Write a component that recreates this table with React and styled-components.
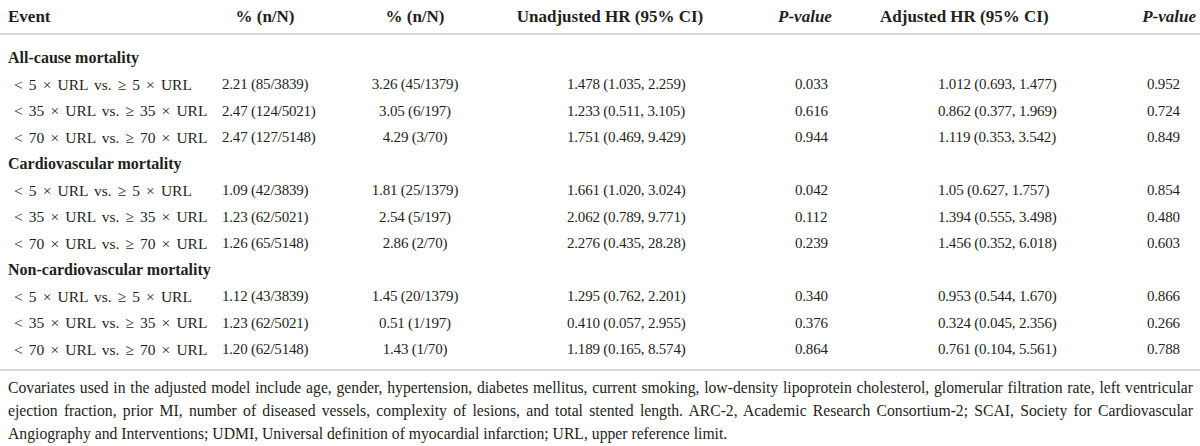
import React from "react";
import styled, { createGlobalStyle } from "styled-components";

const GlobalStyle = createGlobalStyle`
  html, body {
    margin: 0;
    padding: 0;
    background: #ffffff;
  }
  body {
    font-family: "Liberation Serif", "Times New Roman", serif;
    color: #231f20;
  }
`;

const sections = [
  {
    title: "All-cause mortality",
    rows: [
      ["< 5 × URL vs. ≥ 5 × URL", "2.21 (85/3839)", "3.26 (45/1379)", "1.478 (1.035, 2.259)", "0.033", "1.012 (0.693, 1.477)", "0.952"],
      ["< 35 × URL vs. ≥ 35 × URL", "2.47 (124/5021)", "3.05 (6/197)", "1.233 (0.511, 3.105)", "0.616", "0.862 (0.377, 1.969)", "0.724"],
      ["< 70 × URL vs. ≥ 70 × URL", "2.47 (127/5148)", "4.29 (3/70)", "1.751 (0.469, 9.429)", "0.944", "1.119 (0.353, 3.542)", "0.849"],
    ],
  },
  {
    title: "Cardiovascular mortality",
    rows: [
      ["< 5 × URL vs. ≥ 5 × URL", "1.09 (42/3839)", "1.81 (25/1379)", "1.661 (1.020, 3.024)", "0.042", "1.05 (0.627, 1.757)", "0.854"],
      ["< 35 × URL vs. ≥ 35 × URL", "1.23 (62/5021)", "2.54 (5/197)", "2.062 (0.789, 9.771)", "0.112", "1.394 (0.555, 3.498)", "0.480"],
      ["< 70 × URL vs. ≥ 70 × URL", "1.26 (65/5148)", "2.86 (2/70)", "2.276 (0.435, 28.28)", "0.239", "1.456 (0.352, 6.018)", "0.603"],
    ],
  },
  {
    title: "Non-cardiovascular mortality",
    rows: [
      ["< 5 × URL vs. ≥ 5 × URL", "1.12 (43/3839)", "1.45 (20/1379)", "1.295 (0.762, 2.201)", "0.340", "0.953 (0.544, 1.670)", "0.866"],
      ["< 35 × URL vs. ≥ 35 × URL", "1.23 (62/5021)", "0.51 (1/197)", "0.410 (0.057, 2.955)", "0.376", "0.324 (0.045, 2.356)", "0.266"],
      ["< 70 × URL vs. ≥ 70 × URL", "1.20 (62/5148)", "1.43 (1/70)", "1.189 (0.165, 8.574)", "0.864", "0.761 (0.104, 5.561)", "0.788"],
    ],
  },
];

// per column: header alignment, data alignment and data indent
const columns = [
  { head: "Event", headAlign: "left", headPad: 8, align: "left", pad: 14, label: true },
  { head: "% (n/N)", headAlign: "center", align: "left", pad: 32 },
  { head: "% (n/N)", headAlign: "center", align: "center", pad: 0 },
  { head: "Unadjusted HR (95% CI)", headAlign: "center", align: "left", pad: 77 },
  { head: "P-value", italic: true, headAlign: "center", align: "left", pad: 65 },
  { head: "Adjusted HR (95% CI)", headAlign: "center", align: "left", pad: 58 },
  { head: "P-value", italic: true, headAlign: "right", headPad: 4, align: "left", pad: 107 },
];

const footLines = [
  "Covariates used in the adjusted model include age, gender, hypertension, diabetes mellitus, current smoking, low-density lipoprotein cholesterol, glomerular filtration rate, left ventricular",
  "ejection fraction, prior MI, number of diseased vessels, complexity of lesions, and total stented length. ARC-2, Academic Research Consortium-2; SCAI, Society for Cardiovascular",
  "Angiography and Interventions; UDMI, Universal definition of myocardial infarction; URL, upper reference limit.",
];

export default function App() {
  return (
    <>
      <GlobalStyle />
      <Wrapper>
        <Table>
          <HeadRow>
            {columns.map((c, i) => (
              <HeadCell key={i} $align={c.headAlign} $pad={c.headPad || 0} $italic={c.italic}>
                {c.head}
              </HeadCell>
            ))}
          </HeadRow>
          <Body>
            {sections.map((s) => (
              <React.Fragment key={s.title}>
                <SectionRow>
                  <SectionTitle>{s.title}</SectionTitle>
                </SectionRow>
                {s.rows.map((r, ri) => (
                  <DataRow key={ri}>
                    {r.map((v, ci) => (
                      <Cell
                        key={ci}
                        $align={columns[ci].align}
                        $pad={columns[ci].pad}
                        $label={columns[ci].label}
                      >
                        {v}
                      </Cell>
                    ))}
                  </DataRow>
                ))}
              </React.Fragment>
            ))}
          </Body>
        </Table>
        <Footnote>
          {footLines.map((l, i) => (
            <FootLine key={i} $last={i === footLines.length - 1}>
              {l}
            </FootLine>
          ))}
        </Footnote>
      </Wrapper>
    </>
  );
}

const Wrapper = styled.div`
  width: 1200px;
  height: 446px;
  overflow: hidden;
`;

const Table = styled.div`
  display: flex;
  flex-direction: column;
  border-bottom: 2px solid #d9d9d9;
`;

const grid = `
  display: grid;
  grid-template-columns: 190px 150px 150px 240px 150px 160px 160px;
  align-items: center;
`;

const HeadRow = styled.div`
  ${grid}
  height: 33px;
  border-bottom: 2px solid #d9d9d9;
`;

const HeadCell = styled.div`
  font-size: 17px;
  font-weight: bold;
  font-style: ${(p) => (p.$italic ? "italic" : "normal")};
  text-align: ${(p) => p.$align};
  padding-left: ${(p) => (p.$align === "left" ? p.$pad : 0)}px;
  padding-right: ${(p) => (p.$align === "right" ? p.$pad : 0)}px;
  white-space: nowrap;
`;

const Body = styled.div`
  display: flex;
  flex-direction: column;
  padding: 10px 0 6px;
`;

const SectionRow = styled.div`
  height: 26.5px;
  display: flex;
  align-items: center;
`;

const SectionTitle = styled.div`
  padding-left: 8px;
  font-size: 16px;
  font-weight: bold;
`;

const DataRow = styled.div`
  ${grid}
  height: 26.5px;
`;

const Cell = styled.div`
  font-size: ${(p) => (p.$label ? "15.5px" : "15px")};
  text-align: ${(p) => p.$align};
  padding-left: ${(p) => p.$pad}px;
  word-spacing: ${(p) => (p.$label ? "2.2px" : "0")};
  letter-spacing: ${(p) => (p.$label ? "0" : "-0.2px")};
  white-space: nowrap;
`;

const Footnote = styled.div`
  padding: 5px 7px 0 8px;
  font-size: 15.7px;
  line-height: 23px;
`;

const FootLine = styled.div`
  text-align: justify;
  text-align-last: ${(p) => (p.$last ? "left" : "justify")};
  white-space: nowrap;
`;
